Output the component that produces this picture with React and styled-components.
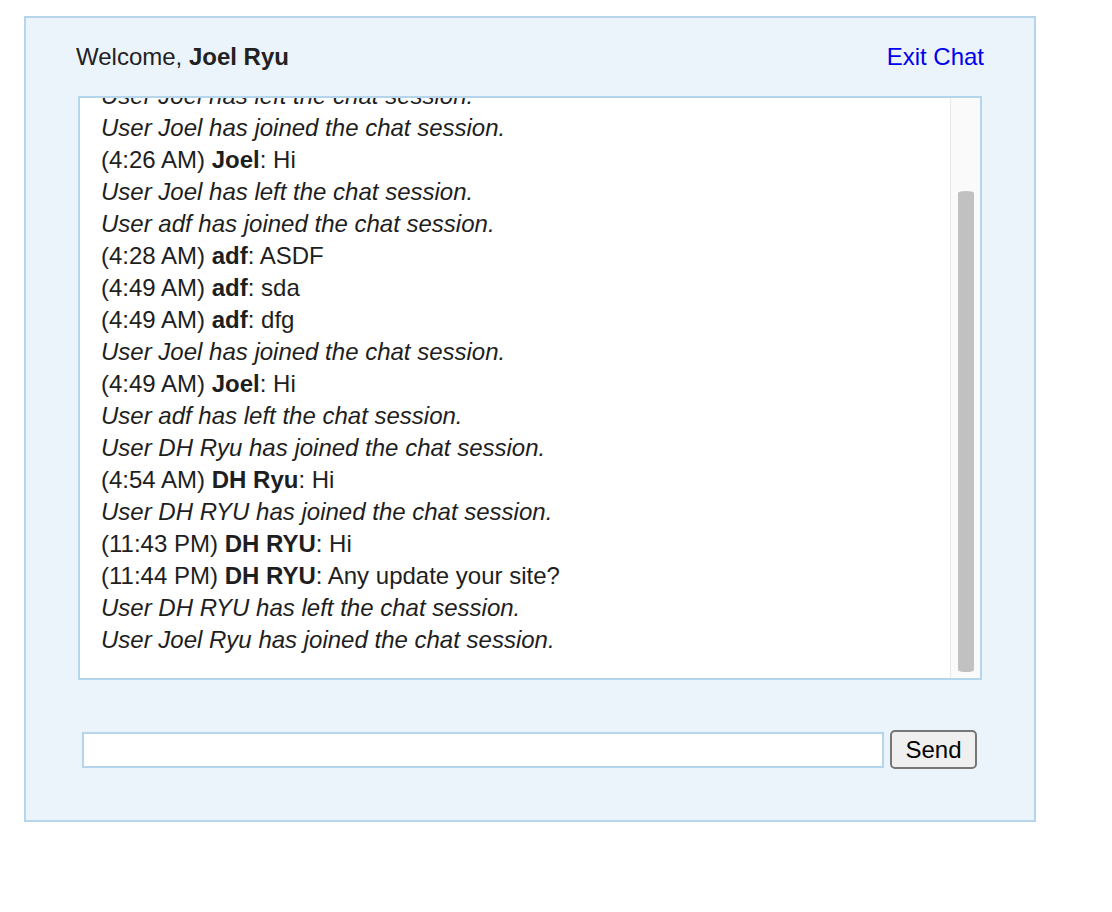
import React, { useEffect, useRef, useState } from "react";
import styled, { createGlobalStyle } from "styled-components";

const GlobalStyle = createGlobalStyle`
  body {
    margin: 8px;
    background: #fff;
    font-family: "Liberation Sans", Arial, Helvetica, sans-serif;
    color: #222;
  }
`;

const messages = [
  { type: "event", text: "User Joel has joined the chat session." },
  { type: "msg", time: "4:21 AM", user: "Joel", text: "Hello" },
  { type: "event", text: "User Joel has left the chat session." },
  { type: "event", text: "User Joel has joined the chat session." },
  { type: "msg", time: "4:26 AM", user: "Joel", text: "Hi" },
  { type: "event", text: "User Joel has left the chat session." },
  { type: "event", text: "User adf has joined the chat session." },
  { type: "msg", time: "4:28 AM", user: "adf", text: "ASDF" },
  { type: "msg", time: "4:49 AM", user: "adf", text: "sda" },
  { type: "msg", time: "4:49 AM", user: "adf", text: "dfg" },
  { type: "event", text: "User Joel has joined the chat session." },
  { type: "msg", time: "4:49 AM", user: "Joel", text: "Hi" },
  { type: "event", text: "User adf has left the chat session." },
  { type: "event", text: "User DH Ryu has joined the chat session." },
  { type: "msg", time: "4:54 AM", user: "DH Ryu", text: "Hi" },
  { type: "event", text: "User DH RYU has joined the chat session." },
  { type: "msg", time: "11:43 PM", user: "DH RYU", text: "Hi" },
  { type: "msg", time: "11:44 PM", user: "DH RYU", text: "Any update your site?" },
  { type: "event", text: "User DH RYU has left the chat session." },
  { type: "event", text: "User Joel Ryu has joined the chat session." },
];

const App = () => {
  const logRef = useRef(null);
  const [thumb, setThumb] = useState({ top: 0, height: 0 });

  useEffect(() => {
    const el = logRef.current;
    if (!el) return;
    el.scrollTop = el.scrollHeight;
    const track = el.clientHeight;
    setThumb({
      top: (el.scrollTop / el.scrollHeight) * track,
      height: (el.clientHeight / el.scrollHeight) * track,
    });
  }, []);

  return (
    <>
      <GlobalStyle />
      <Wrapper>
        <Header>
          <Welcome>
            Welcome, <b>Joel Ryu</b>
          </Welcome>
          <ExitLink href="#">Exit Chat</ExitLink>
        </Header>
        <ChatFrame>
          <ChatLog ref={logRef}>
            {messages.map((m, i) =>
              m.type === "event" ? (
                <EventLine key={i}>{m.text}</EventLine>
              ) : (
                <MessageLine key={i}>
                  ({m.time}) <b>{m.user}</b>: {m.text}
                </MessageLine>
              )
            )}
          </ChatLog>
          <ScrollTrack>
            <ScrollThumb style={{ top: thumb.top, height: thumb.height }} />
          </ScrollTrack>
        </ChatFrame>
        <SendForm onSubmit={(e) => e.preventDefault()}>
          <MessageInput type="text" />
          <SendButton type="submit">Send</SendButton>
        </SendForm>
      </Wrapper>
    </>
  );
};

const Wrapper = styled.div`
  box-sizing: border-box;
  width: 1012px;
  margin: 8px 0 0 16px;
  padding: 23px 52px 51px;
  background: #ecf4fb;
  border: 2px solid #b4d5ec;
`;

const Header = styled.div`
  display: flex;
  justify-content: space-between;
  align-items: center;
  margin: 0 -2px 23px;
  font-size: 24px;
  line-height: 32px;
`;

const Welcome = styled.div`
  color: #222;
  b {
    font-weight: bold;
  }
`;

const ExitLink = styled.a`
  color: #0000ee;
  text-decoration: none;
`;

const ChatFrame = styled.div`
  position: relative;
  box-sizing: border-box;
  height: 584px;
  background: #fff;
  border: 2px solid #b4d5ec;
`;

const ChatLog = styled.div`
  box-sizing: border-box;
  height: 100%;
  overflow: hidden;
  padding: 20px 50px 22px 21px;
  font-size: 24px;
  line-height: 32px;
  color: #1e1e1e;
`;

const ScrollTrack = styled.div`
  position: absolute;
  top: 0;
  right: 0;
  bottom: 0;
  width: 30px;
  background: #fafafa;
  border-left: 1px solid #e8e8e8;
  box-sizing: border-box;
`;

const ScrollThumb = styled.div`
  position: absolute;
  left: 7px;
  width: 16px;
  background: #c1c1c1;
  background-clip: content-box;
  padding: 6px 0;
  box-sizing: border-box;
  border-radius: 14px / 14px;
  &::after {
    content: "";
  }
`;

const EventLine = styled.div`
  font-style: italic;
  white-space: nowrap;
`;

const MessageLine = styled.div`
  white-space: nowrap;
  b {
    font-weight: bold;
  }
`;

const SendForm = styled.form`
  display: flex;
  align-items: center;
  gap: 6px;
  margin: 50px 0 0;
  padding-left: 4px;
`;

const MessageInput = styled.input`
  box-sizing: border-box;
  width: 802px;
  height: 36px;
  border: 2px solid #b4d5ec;
  background: #fff;
  padding: 0 6px;
  font-size: 22px;
  font-family: inherit;
  outline: none;
`;

const SendButton = styled.button`
  box-sizing: border-box;
  width: 87px;
  height: 39px;
  padding: 0;
  font-family: "Liberation Sans", Arial, sans-serif;
  font-size: 24px;
  color: #000;
  background: #efefef;
  border: 2px solid #767676;
  border-radius: 5px;
  cursor: pointer;
`;

export default App;
